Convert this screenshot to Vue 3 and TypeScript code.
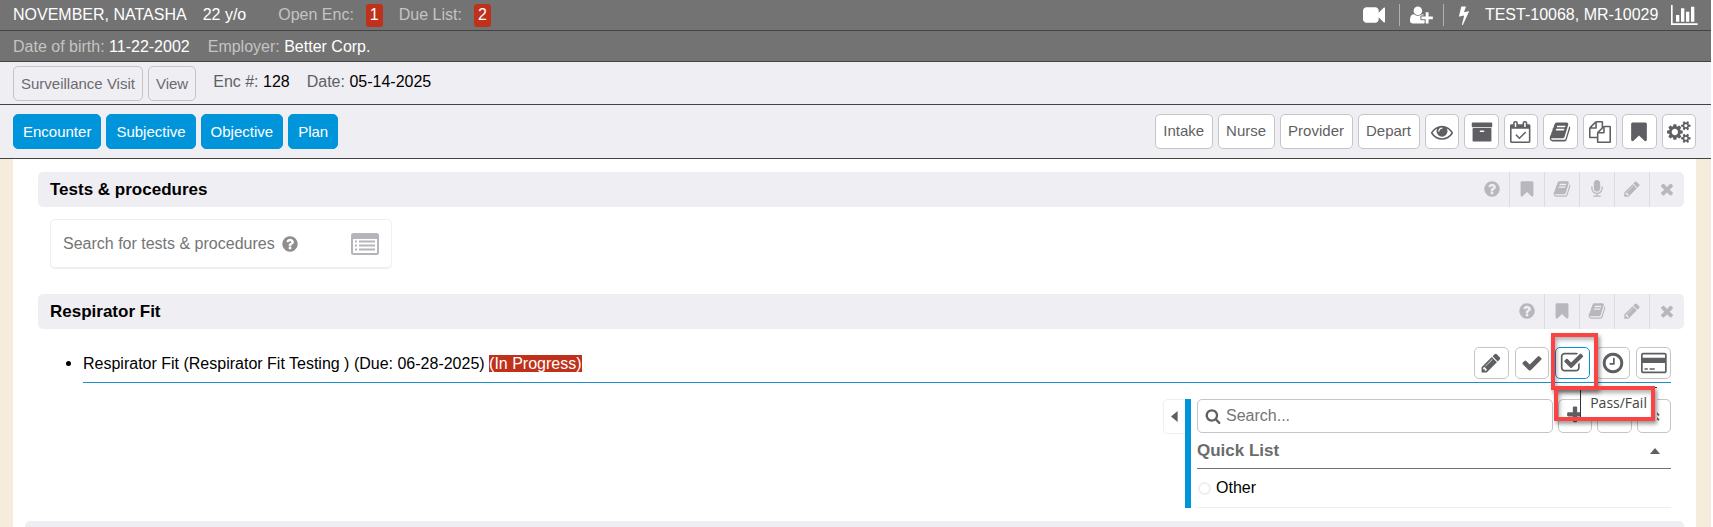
<script setup lang="ts">
import { ref } from 'vue'

interface Glyph { w: number; d: string }

const glyphs: Record<string, Glyph> = {
  video: { w: 1792, d: 'M1792 352v1088q0 42-39 59-13 5-25 5-27 0-45-19l-403-403v166q0 119-84.5 203.5t-203.5 84.5h-704q-119 0-203.5-84.5t-84.5-203.5v-704q0-119 84.5-203.5t203.5-84.5h704q119 0 203.5 84.5t84.5 203.5v165l403-402q18-19 45-19 12 0 25 5 39 17 39 59z' },
  userPlus: { w: 2048, d: 'M704 896q-159 0-271.5-112.5t-112.5-271.5 112.5-271.5 271.5-112.5 271.5 112.5 112.5 271.5-112.5 271.5-271.5 112.5zm960 128h352q13 0 22.5 9.5t9.5 22.5v192q0 13-9.5 22.5t-22.5 9.5h-352v352q0 13-9.5 22.5t-22.5 9.5h-192q-13 0-22.5-9.5t-9.5-22.5v-352h-352q-13 0-22.5-9.5t-9.5-22.5v-192q0-13 9.5-22.5t22.5-9.5h352v-352q0-13 9.5-22.5t22.5-9.5h192q13 0 22.5 9.5t9.5 22.5v352zm-736 224q0 52 38 90t90 38h256v238q-68 50-171 50h-874q-121 0-194-69t-73-190q0-53 3.5-103.5t14-109 26.5-108.5 43-97.5 62-81 85.5-53.5 111.5-20q19 0 39 17 79 61 154.5 91.5t164.5 30.5 164.5-30.5 154.5-91.5q20-17 39-17 132 0 217 96h-223q-52 0-90 38t-38 90v192z' },
  bolt: { w: 1792, d: 'M1333 566q18 20 7 44l-540 1157q-13 25-42 25-4 0-14-2-17-5-25.5-19t-4.5-30l197-808-406 101q-4 1-12 1-18 0-31-11-18-15-13-39l201-825q4-14 16-23t28-9h328q19 0 32 12.5t13 29.5q0 8-5 18l-171 463 396-98q8-2 12-2 19 0 34 15z' },
  chart: { w: 2048, d: 'M640 896v512h-256v-512h256zm384-512v1024h-256v-1024h256zm1024 1152v128h-2048v-1536h128v1408h1920zm-640-896v768h-256v-768h256zm384-384v1152h-256v-1152h256z' },
  eye: { w: 1792, d: 'M1664 960q-152-236-381-353 61 104 61 225 0 185-131.5 316.5t-316.5 131.5-316.5-131.5-131.5-316.5q0-121 61-225-229 117-381 353 133 205 333.5 326.5t434.5 121.5 434.5-121.5 333.5-326.5zm-720-384q0-20-14-34t-34-14q-125 0-214.5 89.5t-89.5 214.5q0 20 14 34t34 14 34-14 14-34q0-86 61-147t147-61q20 0 34-14t14-34zm848 384q0 34-20 69-140 230-376.5 368.5t-499.5 138.5-499.5-139-376.5-368q-20-35-20-69t20-69q140-229 376.5-368t499.5-139 499.5 139 376.5 368q20 35 20 69z' },
  archive: { w: 1792, d: 'M1088 832q0-26-19-45t-45-19h-256q-26 0-45 19t-19 45 19 45 45 19h256q26 0 45-19t19-45zm576-192v960q0 26-19 45t-45 19h-1408q-26 0-45-19t-19-45v-960q0-26 19-45t45-19h1408q26 0 45 19t19 45zm64-448v256q0 26-19 45t-45 19h-1536q-26 0-45-19t-19-45v-256q0-26 19-45t45-19h1536q26 0 45 19t19 45z' },
  calendar: { w: 1792, d: 'M1303 964l-512 512q-10 9-23 9t-23-9l-288-288q-9-10-9-23t9-22l46-46q9-9 22-9t23 9l220 220 444-444q10-9 23-9t22 9l46 46q9 9 9 22t-9 23zm-1175 700h1408v-1024h-1408v1024zm384-1216v-288q0-14-9-23t-23-9h-64q-14 0-23 9t-9 23v288q0 14 9 23t23 9h64q14 0 23-9t9-23zm768 0v-288q0-14-9-23t-23-9h-64q-14 0-23 9t-9 23v288q0 14 9 23t23 9h64q14 0 23-9t9-23zm384-64v1280q0 52-38 90t-90 38h-1408q-52 0-90-38t-38-90v-1280q0-52 38-90t90-38h128v-96q0-66 47-113t113-47h64q66 0 113 47t47 113v96h384v-96q0-66 47-113t113-47h64q66 0 113 47t47 113v96h128q52 0 90 38t38 90z' },
  book: { w: 1792, d: 'M1703 478q40 57 18 129l-275 906q-19 64-76.5 107.5t-122.5 43.5h-923q-77 0-148.5-53.5t-99.5-131.5q-24-67-2-127 0-4 3-27t4-37q1-8-3-21.5t-3-19.5q2-11 8-21t16.5-23.5 16.5-23.5q23-38 45-91.5t30-91.5q3-10 .5-30t-.5-28q3-11 17-28t17-23q21-36 42-92t25-90q1-9-2.5-32t.5-28q4-13 22-30.5t22-22.5q19-26 42.5-84.5t27.5-96.5q1-8-3-25.5t-2-26.5q2-8 9-18t18-23 17-21q8-12 16.5-30.5t15-35 16-36 19.5-32 26.5-23.5 36-11.5 47.5 5.5l-1 3q38-9 51-9h761q74 0 114 56t18 130l-274 906q-36 119-71.5 153.5t-128.5 34.5h-869q-27 0-38 15-11 16-1 43 24 70 144 70h923q29 0 56-15.5t35-41.5l300-987q7-22 5-57 38 15 59 43zm-1064 2q-4 13 2 22.5t20 9.5h608q13 0 25.5-9.5t16.5-22.5l21-64q4-13-2-22.5t-20-9.5h-608q-13 0-25.5 9.5t-16.5 22.5zm-83 256q-4 13 2 22.5t20 9.5h608q13 0 25.5-9.5t16.5-22.5l21-64q4-13-2-22.5t-20-9.5h-608q-13 0-25.5 9.5t-16.5 22.5z' },
  files: { w: 1792, d: 'M1696 384q40 0 68 28t28 68v1216q0 40-28 68t-68 28h-960q-40 0-68-28t-28-68v-288h-544q-40 0-68-28t-28-68v-672q0-40 20-88t48-76l408-408q28-28 76-48t88-20h416q40 0 68 28t28 68v328q68-40 128-40h416zm-544 213l-299 299h299v-299zm-640-384l-299 299h299v-299zm196 647l316-316v-416h-384v416q0 40-28 68t-68 28h-416v640h512v-256q0-40 20-88t48-76zm956 804v-1152h-384v416q0 40-28 68t-68 28h-416v640h896z' },
  bookmark: { w: 1792, d: 'M1420 128q23 0 44 9 33 13 52.5 41t19.5 62v1289q0 34-19.5 62t-52.5 41q-19 8-44 8-48 0-83-32l-441-424-441 424q-36 33-83 33-23 0-44-9-33-13-52.5-41t-19.5-62v-1289q0-34 19.5-62t52.5-41q21-9 44-9h1048z' },
  cogs: { w: 1920, d: 'M896 896q0-106-75-181t-181-75-181 75-75 181 75 181 181 75 181-75 75-181zm768 512q0-52-38-90t-90-38-90 38-38 90q0 53 37.5 90.5t90.5 37.5 90.5-37.5 37.5-90.5zm0-1024q0-52-38-90t-90-38-90 38-38 90q0 53 37.5 90.5t90.5 37.5 90.5-37.5 37.5-90.5zm-384 421v185q0 10-7 19.5t-16 10.5l-155 24q-11 35-32 76 34 48 90 115 7 11 7 20 0 12-7 19-23 30-82.5 89.5t-78.5 59.5q-11 0-21-7l-115-90q-37 19-77 31-11 108-23 155-7 24-30 24h-186q-11 0-20-7.5t-10-17.5l-23-153q-34-10-75-31l-118 89q-7 7-20 7-11 0-21-8-144-133-144-160 0-9 7-19 10-14 41-53t47-61q-23-44-35-82l-152-24q-10-1-17-9.5t-7-19.5v-185q0-10 7-19.5t16-10.5l155-24q11-35 32-76-34-48-90-115-7-11-7-20 0-12 7-20 22-30 82-89t79-59q11 0 21 7l115 90q34-18 77-32 11-108 23-154 7-24 30-24h186q11 0 20 7.5t10 17.5l23 153q34 10 75 31l118-89q8-7 20-7 11 0 21 8 144 133 144 160 0 8-7 19-12 16-42 54t-45 60q23 48 34 82l152 23q10 2 17 10.5t7 19.5zm640 533v140q0 16-149 31-12 27-30 52 51 113 51 138 0 4-4 7-122 71-124 71-8 0-46-47t-52-68q-20 2-30 2t-30-2q-14 21-52 68t-46 47q-2 0-124-71-4-3-4-7 0-25 51-138-18-25-30-52-149-15-149-31v-140q0-16 149-31 13-29 30-52-51-113-51-138 0-4 4-7 4-2 35-20t59-34 30-16q8 0 46 46.5t52 67.5q20-2 30-2t30 2q51-71 92-112l6-2q4 0 124 70 4 3 4 7 0 25-51 138 17 23 30 52 149 15 149 31zm0-1024v140q0 16-149 31-12 27-30 52 51 113 51 138 0 4-4 7-122 71-124 71-8 0-46-47t-52-68q-20 2-30 2t-30-2q-14 21-52 68t-46 47q-2 0-124-71-4-3-4-7 0-25 51-138-18-25-30-52-149-15-149-31v-140q0-16 149-31 13-29 30-52-51-113-51-138 0-4 4-7 4-2 35-20t59-34 30-16q8 0 46 46.5t52 67.5q20-2 30-2t30 2q51-71 92-112l6-2q4 0 124 70 4 3 4 7 0 25-51 138 17 23 30 52 149 15 149 31z' },
  help: { w: 1792, d: 'M1024 1376v-192q0-14-9-23t-23-9h-192q-14 0-23 9t-9 23v192q0 14 9 23t23 9h192q14 0 23-9t9-23zm256-672q0-88-55.5-163t-138.5-116-170-41q-243 0-371 213-15 24 8 42l132 100q7 6 19 6 16 0 25-12 53-68 86-92 34-24 86-24 48 0 85.5 26t37.5 59q0 38-20 61t-68 45q-63 28-115.5 86.5t-52.5 125.5v36q0 14 9 23t23 9h192q14 0 23-9t9-23q0-19 21.5-49.5t54.5-49.5q32-18 49-28.5t46-35 44.5-48 28-60.5 12.5-81zm384 192q0 209-103 385.5t-279.5 279.5-385.5 103-385.5-103-279.5-279.5-103-385.5 103-385.5 279.5-279.5 385.5-103 385.5 103 279.5 279.5 103 385.5z' },
  mic: { w: 1792, d: 'M1472 704v128q0 221-147.5 384.5t-364.5 187.5v132h256q26 0 45 19t19 45-19 45-45 19h-640q-26 0-45-19t-19-45 19-45 45-19h256v-132q-217-24-364.5-187.5t-147.5-384.5v-128q0-26 19-45t45-19 45 19 19 45v128q0 185 131.5 316.5t316.5 131.5 316.5-131.5 131.5-316.5v-128q0-26 19-45t45-19 45 19 19 45zm-256-384v512q0 132-94 226t-226 94-226-94-94-226v-512q0-132 94-226t226-94 226 94 94 226z' },
  pencil: { w: 1792, d: 'M491 1536l91-91-235-235-91 91v107h128v128h107zm523-928q0-22-22-22-10 0-17 7l-542 542q-7 7-7 17 0 22 22 22 10 0 17-7l542-542q7-7 7-17zm-54-192l416 416-832 832h-416v-416zm683 96q0 53-37 90l-166 166-416-416 166-165q36-38 90-38 53 0 91 38l235 234q37 39 37 91z' },
  times: { w: 1792, d: 'M1490 1322q0 40-28 68l-136 136q-28 28-68 28t-68-28l-294-294-294 294q-28 28-68 28t-68-28l-136-136q-28-28-28-68t28-68l294-294-294-294q-28-28-28-68t28-68l136-136q28-28 68-28t68 28l294 294 294-294q28-28 68-28t68 28l136 136q28 28 28 68t-28 68l-294 294 294 294q28 28 28 68z' },
  check: { w: 1792, d: 'M1671 566q0 40-28 68l-724 724-136 136q-28 28-68 28t-68-28l-136-136-362-362q-28-28-28-68t28-68l136-136q28-28 68-28t68 28l294 295 656-657q28-28 68-28t68 28l136 136q28 28 28 68z' },
  checkSquare: { w: 1792, d: 'M1472 930v318q0 119-84.5 203.5t-203.5 84.5h-832q-119 0-203.5-84.5t-84.5-203.5v-832q0-119 84.5-203.5t203.5-84.5h832q63 0 117 25 15 7 18 23 3 17-9 29l-49 49q-10 10-23 10-3 0-9-2-23-6-45-6h-832q-66 0-113 47t-47 113v832q0 66 47 113t113 47h832q66 0 113-47t47-113v-254q0-13 9-22l64-64q10-10 23-10 6 0 12 3 20 8 20 29zm231-489l-814 814q-24 24-57 24t-57-24l-430-430q-24-24-24-57t24-57l110-110q24-24 57-24t57 24l263 263 647-647q24-24 57-24t57 24l110 110q24 24 24 57t-24 57z' },
  clock: { w: 1792, d: 'M1024 544v448q0 14-9 23t-23 9h-320q-14 0-23-9t-9-23v-64q0-14 9-23t23-9h224v-352q0-14 9-23t23-9h64q14 0 23 9t9 23zm416 352q0-148-73-273t-198-198-273-73-273 73-198 198-73 273 73 273 198 198 273 73 273-73 198-198 73-273zm224 0q0 209-103 385.5t-279.5 279.5-385.5 103-385.5-103-279.5-279.5-103-385.5 103-385.5 279.5-279.5 385.5-103 385.5 103 279.5 279.5 103 385.5z' },
  card: { w: 1920, d: 'M1760 128q66 0 113 47t47 113v1216q0 66-47 113t-113 47h-1600q-66 0-113-47t-47-113v-1216q0-66 47-113t113-47h1600zm-1600 128q-13 0-22.5 9.5t-9.5 22.5v224h1664v-224q0-13-9.5-22.5t-22.5-9.5h-1600zm1600 1280q13 0 22.5-9.5t9.5-22.5v-608h-1664v608q0 13 9.5 22.5t22.5 9.5h1600zm-1504-128v-128h256v128h-256zm384 0v-128h384v128h-384z' },
  search: { w: 1792, d: 'M1216 832q0-185-131.5-316.5t-316.5-131.5-316.5 131.5-131.5 316.5 131.5 316.5 316.5 131.5 316.5-131.5 131.5-316.5zm512 832q0 52-38 90t-90 38q-54 0-90-38l-343-342q-179 124-399 124-143 0-273.5-55.5t-225-150-150-225-55.5-273.5 55.5-273.5 150-225 225-150 273.5-55.5 273.5 55.5 225 150 150 225 55.5 273.5q0 220-124 399l343 343q37 37 37 90z' },
  plus: { w: 1792, d: 'M1600 736v192q0 40-28 68t-68 28h-416v416q0 40-28 68t-68 28h-192q-40 0-68-28t-28-68v-416h-416q-40 0-68-28t-28-68v-192q0-40 28-68t68-28h416v-416q0-40 28-68t68-28h192q40 0 68 28t28 68v416h416q40 0 68 28t28 68z' },
  minus: { w: 1792, d: 'M288 736h1216q96 0 96 96v192q0 96-96 96h-1216q-96 0-96-96v-192q0-96 96-96z' },
  collapse: { w: 1792, d: 'M896 800l560 560-120 120-440-440-440 440-120-120zM896 320l560 560-120 120-440-440-440 440-120-120z' },
}

const stages = ['Encounter', 'Subjective', 'Objective', 'Plan']
const departments = ['Intake', 'Nurse', 'Provider', 'Depart']
const tools = [
  { icon: 'eye', label: 'Preview' },
  { icon: 'archive', label: 'Archive' },
  { icon: 'calendar', label: 'Schedule' },
  { icon: 'book', label: 'Reference' },
  { icon: 'files', label: 'Copy' },
  { icon: 'bookmark', label: 'Bookmark' },
  { icon: 'cogs', label: 'Settings' },
]
const testActions = ['help', 'bookmark', 'book', 'mic', 'pencil', 'times']
const fitActions = ['help', 'bookmark', 'book', 'pencil', 'times']
const rowActions = [
  { icon: 'pencil', label: 'Edit' },
  { icon: 'check', label: 'Complete' },
  { icon: 'checkSquare', label: 'Pass/Fail' },
  { icon: 'clock', label: 'Defer' },
  { icon: 'card', label: 'Billing' },
]
const listActions = [
  { icon: 'plus', label: 'Add' },
  { icon: 'minus', label: 'Remove' },
  { icon: 'collapse', label: 'Collapse all' },
]

const testQuery = ref('')
const listQuery = ref('')
const picked = ref('')
const box = (name: string) => `0 0 ${glyphs[name].w} 1792`
</script>

<template>
  <div class="page">
    <header class="patient">
      <div class="bar bar-main">
        <span class="name">NOVEMBER, NATASHA</span>
        <span class="age">22 y/o</span>
        <span class="label">Open Enc:</span>
        <a href="#" class="count">1</a>
        <span class="label due">Due List:</span>
        <a href="#" class="count">2</a>
        <div class="bar-right">
          <button class="plain" aria-label="Video call"><svg class="i22" :viewBox="box('video')"><path :d="glyphs.video.d" /></svg></button>
          <button class="plain split" aria-label="Add user"><svg class="i20" :viewBox="box('userPlus')"><path :d="glyphs.userPlus.d" /></svg></button>
          <button class="plain split" aria-label="Quick actions"><svg class="i20" :viewBox="box('bolt')"><path :d="glyphs.bolt.d" /></svg></button>
          <span class="ids">TEST-10068, MR-10029</span>
          <button class="plain" aria-label="Charts"><svg class="i20" viewBox="0 128 2048 1536"><path :d="glyphs.chart.d" /></svg></button>
        </div>
      </div>
      <div class="bar">
        <span><span class="label">Date of birth:</span> 11-22-2002</span>
        <span><span class="label">Employer:</span> Better Corp.</span>
      </div>
    </header>

    <div class="visit">
      <button class="btn clear">Surveillance Visit</button>
      <button class="btn clear">View</button>
      <span class="fact"><span class="muted">Enc #:</span> 128</span>
      <span class="fact"><span class="muted">Date:</span> 05-14-2025</span>
    </div>

    <nav class="toolbar">
      <button v-for="s in stages" :key="s" class="btn stage">{{ s }}</button>
      <span class="spacer"></span>
      <button v-for="d in departments" :key="d" class="btn dept">{{ d }}</button>
      <div class="tools">
        <button v-for="t in tools" :key="t.icon" class="btn icon" :aria-label="t.label">
          <svg class="i22" :viewBox="box(t.icon)"><path :d="glyphs[t.icon].d" /></svg>
        </button>
      </div>
    </nav>

    <main class="sheet">
      <section>
        <div class="head">
          <h2>Tests &amp; procedures</h2>
          <button v-for="a in testActions" :key="a" class="cell" :aria-label="a">
            <svg class="i18" :viewBox="box(a)"><path :d="glyphs[a].d" /></svg>
          </button>
        </div>
        <div class="finder">
          <input v-model="testQuery" type="text" placeholder="Search for tests &amp; procedures" aria-label="Search for tests &amp; procedures" />
          <svg class="i18 hint" :viewBox="box('help')"><path :d="glyphs.help.d" /></svg>
          <button class="plain lister" aria-label="Browse list"><svg class="i22" viewBox="0 192 1792 1408"><path fill-rule="evenodd" d="M160 192h1472q160 0 160 160v1088q0 160-160 160h-1472q-160 0-160-160v-1088q0-160 160-160zM128 576v864q0 32 32 32h1472q32 0 32-32v-864z" /><path d="M256 672h128v128h-128zM512 672h1024v128h-1024zM256 928h128v128h-128zM512 928h1024v128h-1024zM256 1184h128v128h-128zM512 1184h1024v128h-1024z" /></svg></button>
        </div>
      </section>

      <section>
        <div class="head">
          <h2>Respirator Fit</h2>
          <button v-for="a in fitActions" :key="a" class="cell" :aria-label="a">
            <svg class="i18" :viewBox="box(a)"><path :d="glyphs[a].d" /></svg>
          </button>
        </div>
        <ul class="orders">
          <li>
            <span class="order">Respirator Fit (Respirator Fit Testing ) (Due: 06-28-2025) <mark>(In Progress)</mark></span>
            <div class="row-actions">
              <div v-for="a in rowActions" :key="a.icon" class="slot">
                <button class="btn icon low" :class="{ on: a.icon === 'checkSquare' }" :aria-label="a.label">
                  <svg :class="a.icon === 'pencil' || a.icon === 'check' ? 'i22' : 'i24'" :viewBox="box(a.icon)"><path :d="glyphs[a.icon].d" /></svg>
                </button>
                <template v-if="a.icon === 'checkSquare'">
                  <span class="tip" role="tooltip">Pass/Fail</span>
                  <span class="ring ring-button"></span>
                  <span class="ring ring-tip"></span>
                </template>
              </div>
            </div>
          </li>
        </ul>
        <div class="side">
          <button class="fold" aria-label="Toggle panel"><svg viewBox="0 0 6 10"><path d="M6 0v10L0 5z" /></svg></button>
          <div class="panel">
            <div class="search-row">
              <label class="search">
                <svg class="i16" :viewBox="box('search')"><path :d="glyphs.search.d" /></svg>
                <input v-model="listQuery" type="text" placeholder="Search..." aria-label="Search" />
              </label>
              <div class="list-actions">
                <button v-for="a in listActions" :key="a.icon" class="btn icon" :aria-label="a.label">
                  <svg :class="a.icon === 'plus' ? 'i20' : 'i18'" :viewBox="box(a.icon)"><path :d="glyphs[a.icon].d" /></svg>
                </button>
              </div>
            </div>
            <div class="quick">
              <h3>Quick List</h3>
              <button class="plain" aria-label="Collapse Quick List"><svg viewBox="0 0 10 6"><path d="M0 6h10L5 0z" /></svg></button>
            </div>
            <label class="choice"><input v-model="picked" type="radio" name="quick" value="other" />Other</label>
          </div>
        </div>
      </section>

      <section class="next"><div class="head"></div></section>
    </main>
  </div>
</template>

<style>
html, body { background: #fff; overflow: hidden; }
</style>

<style scoped>
.page {
  box-sizing: border-box;
  height: 100vh;
  overflow: hidden;
  padding-right: 2px;
  display: flex;
  flex-direction: column;
  font: 16px/20px "Liberation Sans", Arial, sans-serif;
  color: #000;
}
.page *, .page *::before { box-sizing: border-box; }
button, input { font: inherit; color: inherit; margin: 0; }
button { cursor: pointer; }
svg { display: block; fill: currentColor; flex: none; }
.i16 { height: 16px; }
.i18 { height: 18px; }
.i20 { height: 20px; }
.i22 { height: 22px; }
.i24 { height: 24px; }
.plain { border: 0; background: none; padding: 0; }

.patient { color: #fff; background: #737373; }
.bar {
  display: flex;
  align-items: center;
  height: 31px;
  padding: 1px 13px 0;
  gap: 18px;
  border-bottom: 1px solid #444;
}
.bar-main { gap: 12px; padding-top: 0; }
.age { margin-right: 20px; margin-left: 4px; }
.label { color: #c4c4c4; }
.due { margin-left: 4px; }
.count {
  height: 23px;
  line-height: 22px;
  padding: 0 4px;
  border-radius: 3px;
  background: #bf311a;
  color: #fff;
  text-decoration: none;
}
.bar-right { display: flex; align-items: center; margin-left: auto; }
.split {
  height: 22px;
  display: flex;
  align-items: center;
  margin-left: 14px;
  padding-left: 10px;
  border-left: 1px solid #b0b0b0;
}
.split + .split { margin-left: 10px; }
.ids { margin-left: 11px; margin-right: 13px; }

.visit, .toolbar {
  display: flex;
  gap: 5px;
  padding: 4px 15px 3px 13px;
  background: #efeef3;
  border-bottom: 1px solid #444;
}
.toolbar { padding-top: 9px; padding-bottom: 9px; }
.btn {
  height: 35px;
  padding: 0 7px;
  border: 1px solid #c5c4c9;
  border-radius: 5px;
  background: #fff;
  color: #5f5f63;
  font-size: 15px;
  line-height: 30px;
  white-space: nowrap;
}
.clear { background: transparent; color: #6b6b70; }
.dept { padding: 0 8px 2px 7px; }
.stage { padding: 0 9px; border-color: #0095da; background: #0095da; color: #fff; }
.fact { margin-left: 12px; padding-top: 6px; }
.muted { color: #5f5f63; }
.spacer { flex: 1; }
.icon { display: flex; align-items: center; justify-content: center; padding: 0; width: 100%; }
.tools { display: grid; grid-template-columns: repeat(7, 1fr); gap: 5px; width: 271px; }

.sheet {
  flex: 1;
  padding: 13px 12px 0 25px;
  border: solid #f5ecdc;
  border-width: 0 15px 0 13px;
}
.head {
  display: flex;
  height: 35px;
  padding-left: 12px;
  border-radius: 5px;
  background: #efeef3;
}
h2 { flex: 1; margin: 0; font-size: 17px; line-height: 36px; }
.cell {
  width: 35px;
  display: flex;
  align-items: center;
  justify-content: center;
  padding: 0 0 2px;
  border: 0;
  background: none;
  color: #b8b7bd;
}
.cell + .cell { border-left: 1px solid #dcdbe0; }
.finder {
  display: flex;
  align-items: center;
  width: 342px;
  height: 50px;
  margin: 12px 0 25px 12px;
  padding: 0 12px 0 12px;
  border: 1px solid #efeef3;
  border-bottom-width: 2px;
  border-radius: 5px;
}
.finder input { width: 218px; padding: 0; border: 0; outline: 0; background: none; }
.finder input::placeholder { color: #757575; opacity: 1; }
.hint { color: #8e8e8e; }
.lister { margin-left: auto; color: #b5b4ba; }

.orders { list-style: none; margin: 0 13px 0 45px; padding: 18px 0 0; }
.orders li {
  display: flex;
  align-items: flex-start;
  height: 36px;
  border-bottom: 1px solid #1a8fc9;
}
.orders li::before {
  content: "";
  width: 5px;
  height: 5px;
  margin: 14px 12px 0 -17px;
  border-radius: 50%;
  background: #000;
}
.order { flex: 1; padding-top: 7px; }
mark { background: #bf311a; color: #fff; }
.row-actions { display: grid; grid-template-columns: repeat(5, 1fr); gap: 6px; width: 197px; }
.slot { position: relative; }
.low { height: 32px; }
.on { border-color: #0095da; }
.tip {
  position: absolute;
  z-index: 1;
  left: 25px;
  top: 40px;
  width: 77px;
  height: 32px;
  padding-left: 9px;
  border: solid #333;
  border-width: 1px 0 0 1px;
  background: #fff;
  color: #444;
  font: 14px/29px "Open Sans", "Noto Sans", sans-serif;
}
.ring {
  position: absolute;
  z-index: 2;
  border: 4px solid #fa4343;
  box-shadow: 2px 3px 4px rgba(0, 0, 0, .4), inset 2px 3px 4px rgba(0, 0, 0, .3);
  pointer-events: none;
}
.ring-button { left: -4px; top: -14px; width: 47px; height: 57px; }
.ring-tip { left: -1px; top: 39px; width: 101px; height: 35px; }

.side { display: flex; justify-content: flex-end; margin: 16px 13px 13px 0; }
.fold {
  width: 22px;
  height: 35px;
  padding: 0 0 0 7px;
  border: 1px solid #efeef3;
  border-right: 0;
  border-radius: 5px 0 0 5px;
  background: #fff;
  color: #5f5f63;
}
.fold svg { height: 11px; }
.panel { width: 486px; border-left: 6px solid #0095da; padding-left: 6px; }
.search-row { display: flex; gap: 5px; }
.search {
  flex: 1;
  display: flex;
  align-items: center;
  gap: 5px;
  height: 34px;
  padding: 0 7px;
  border: 1px solid #c5c4c9;
  border-radius: 5px;
  color: #5f5f63;
}
.search input { flex: 1; min-width: 0; padding: 0; border: 0; outline: 0; background: none; }
.search input::placeholder { color: #757575; opacity: 1; }
.list-actions { display: grid; grid-template-columns: repeat(3, 1fr); gap: 5px; width: 113px; }
.list-actions .btn { height: 34px; padding-bottom: 2px; }
.quick { display: flex; align-items: center; height: 36px; padding-right: 11px; border-bottom: 1px solid #737373; }
h3 { flex: 1; margin: 0; font-size: 17px; color: #6b6b6b; }
.quick .plain { color: #5f5f63; }
.quick svg { height: 6px; }
.choice { display: flex; align-items: center; gap: 5px; height: 39px; padding-left: 1px; border-bottom: 1px solid #efeef3; }
.choice input {
  appearance: none;
  width: 13px;
  height: 13px;
  border: 2px solid #efeef3;
  border-radius: 50%;
}
.choice input:checked { border-color: #0095da; }
.next { margin-left: -13px; }
</style>
